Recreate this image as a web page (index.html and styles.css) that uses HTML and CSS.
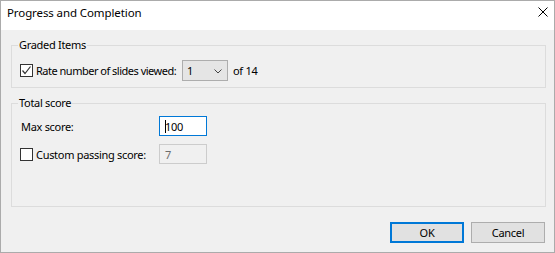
FILE: index.html
```html
<!DOCTYPE html>
<html>
<head>
<meta charset="utf-8">
<link rel="stylesheet" href="styles.css">
</head>
<body>
<div class="window">
  <div class="titlebar">
    <span class="title">Progress and Completion</span>
    <svg class="close" width="10" height="10" viewBox="0 0 10 10"><path d="M0.5 0.5 L9.5 9.5 M9.5 0.5 L0.5 9.5" stroke="#000" stroke-width="1" fill="none"/></svg>
  </div>
  <div class="content">
    <div class="group group1">
      <span class="legend">Graded Items</span>
      <div class="row">
        <span class="check checked"><svg width="11" height="11" viewBox="0 0 11 11"><path d="M1.5 5.5 L4 8.5 L9.5 1.5" stroke="#333" stroke-width="1.2" fill="none"/></svg></span>
        <span class="label label-rate">Rate number of slides viewed:</span>
        <span class="combo"><span class="combo-val">1</span><svg class="chev" width="8" height="5" viewBox="0 0 8 5"><path d="M0.5 0.5 L4 4 L7.5 0.5" stroke="#444" stroke-width="1" fill="none"/></svg></span>
        <span class="of">of 14</span>
      </div>
    </div>
    <div class="group group2">
      <span class="legend">Total score</span>
      <div class="row row-max">
        <span class="label label-max">Max score:</span>
        <span class="input input-focus"><span class="caret"></span>100</span>
      </div>
      <div class="row row-pass">
        <span class="check"></span>
        <span class="label label-pass">Custom passing score:</span>
        <span class="input input-disabled">7</span>
      </div>
    </div>
    <div class="buttons">
      <span class="btn btn-default">OK</span>
      <span class="btn">Cancel</span>
    </div>
  </div>
</div>
</body>
</html>
```

FILE: styles.css
```css
html, body {
  margin: 0;
  padding: 0;
  background: #f0f0f0;
}
body {
  font-family: "Noto Sans", "Open Sans", sans-serif;
  font-size: 11px;
  letter-spacing: -0.3px;
  color: #000;
  white-space: nowrap;
}
.window {
  box-sizing: border-box;
  width: 555px;
  height: 253px;
  border: 1px solid #ababab;
  background: #f0f0f0;
  display: flex;
  flex-direction: column;
}
.titlebar {
  height: 29px;
  background: #fff;
  display: flex;
  align-items: flex-start;
  justify-content: space-between;
}
.title {
  margin-left: 6px;
  margin-top: 4px;
  line-height: 16px;
  font-size: 11.5px;
  letter-spacing: -0.1px;
}
.close {
  margin-top: 6px;
  margin-right: 6px;
}
.content {
  display: flex;
  flex-direction: column;
  padding: 0 8px 0 10px;
}
.group {
  border: 1px solid #dcdcdc;
  display: flex;
  flex-direction: column;
  align-items: flex-start;
  padding: 0 0 0 8px;
}
.group1 {
  margin-top: 15px;
  height: 41px;
}
.group2 {
  margin-top: 15px;
  height: 102px;
}
.legend {
  line-height: 16px;
  height: 16px;
  margin: -9px 0 0 -2px;
  padding: 0 1px;
  background: #f0f0f0;
}
.row {
  display: flex;
  align-items: center;
}
.group1 .row {
  margin-top: 7px;
  height: 21px;
}
.check {
  box-sizing: border-box;
  flex: none;
  width: 13px;
  height: 13px;
  border: 1px solid #333;
  background: #fff;
  display: flex;
  align-items: center;
  justify-content: center;
}
.label {
  margin-left: 3px;
}
.label-rate {
  width: 146px;
  letter-spacing: -0.5px;
}
.combo {
  box-sizing: border-box;
  flex: none;
  width: 46px;
  height: 21px;
  border: 1px solid #adadad;
  background: #e5e5e5;
  display: flex;
  align-items: center;
  justify-content: space-between;
  padding: 0 5px 0 4px;
}
.chev {
  margin-top: 1px;
}
.of {
  margin-left: 5px;
}
.row-max {
  margin-top: 5px;
  height: 20px;
}
.label-max {
  margin-left: 1px;
  width: 138px;
}
.input {
  box-sizing: border-box;
  flex: none;
  width: 48px;
  height: 20px;
  border: 1px solid #cccccc;
  display: flex;
  align-items: center;
  padding-left: 5px;
}
.input-focus {
  border-color: #0078d7;
  background: #fff;
}
.caret {
  width: 1px;
  height: 13px;
  background: #000;
  margin-right: -1px;
}
.input-disabled {
  background: #f0f0f0;
  color: #6d6d6d;
}
.row-pass {
  margin-top: 8px;
  height: 20px;
}
.label-pass {
  width: 123px;
}
.buttons {
  display: flex;
  justify-content: flex-end;
  gap: 7px;
  margin-top: 15px;
  margin-right: 1px;
}
.btn {
  box-sizing: border-box;
  width: 74px;
  height: 21px;
  border: 1px solid #adadad;
  background: #e1e1e1;
  display: flex;
  align-items: center;
  justify-content: center;
}
.btn-default {
  border: 2px solid #0078d7;
}
```
